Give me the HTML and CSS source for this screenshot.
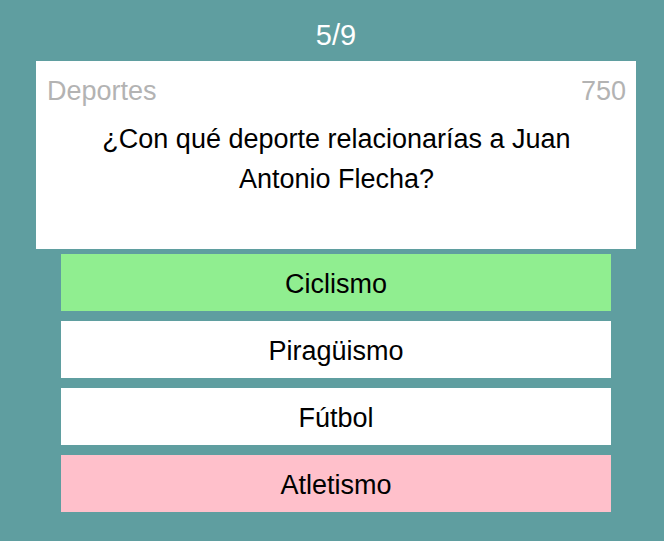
FILE: index.html
```html
<!DOCTYPE html>
<html lang="es">
<head>
<meta charset="utf-8">
<title>Trivia</title>
<link rel="stylesheet" href="styles.css">
</head>
<body>
<main class="quiz">
  <div class="progress">5/9</div>
  <section class="card">
    <div class="meta">
      <span class="category">Deportes</span>
      <span class="points">750</span>
    </div>
    <p class="question">¿Con qué deporte relacionarías a Juan Antonio Flecha?</p>
  </section>
  <div class="answers">
    <div class="answer correct">Ciclismo</div>
    <div class="answer">Piragüismo</div>
    <div class="answer">Fútbol</div>
    <div class="answer wrong">Atletismo</div>
  </div>
</main>
</body>
</html>
```
FILE: styles.css
```css
html, body {
  margin: 0;
  padding: 0;
  background: #5f9ea0;
  height: 100%;
}
body {
  padding-left: 8px;
  box-sizing: border-box;
  font-family: "Liberation Sans", Arial, sans-serif;
}
.quiz {
  width: 600px;
  margin: 0 auto;
}
.progress {
  color: #ffffff;
  text-align: center;
  font-size: 29px;
  line-height: 36px;
  padding-top: 17px;
  height: 44px;
}
.card {
  background: #ffffff;
  height: 188px;
  box-sizing: border-box;
  padding: 14px 10px 0 11px;
}
.meta {
  display: flex;
  justify-content: space-between;
  color: #b3b3b3;
  font-size: 27px;
  line-height: 32px;
}
.question {
  margin: 12px auto 0;
  max-width: 520px;
  text-align: center;
  font-size: 27px;
  line-height: 40px;
  color: #000000;
}
.answers {
  width: 550px;
  margin: 5px auto 0;
  display: flex;
  flex-direction: column;
  gap: 10px;
}
.answer {
  height: 57px;
  box-sizing: border-box;
  padding-top: 3px;
  display: flex;
  align-items: center;
  justify-content: center;
  background: #ffffff;
  color: #000000;
  font-size: 27px;
}
.answer.correct {
  background: #90ee90;
}
.answer.wrong {
  background: #ffc0cb;
}
```
